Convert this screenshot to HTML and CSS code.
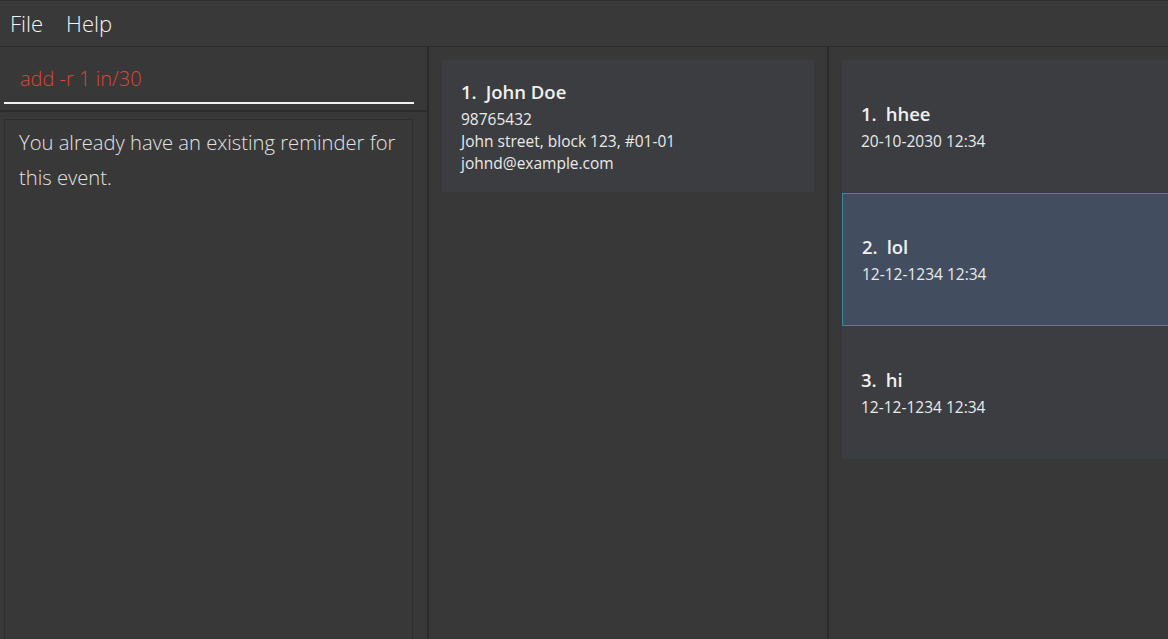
FILE: index.html
```html
<!DOCTYPE html>
<html>
<head>
<meta charset="utf-8">
<link rel="stylesheet" href="styles.css">
</head>
<body>
<div class="menubar">
  <span class="menu-item">File</span>
  <span class="menu-item">Help</span>
</div>
<div class="main">
  <div class="left">
    <div class="cmd">
      <div class="cmd-field">add -r 1 in/30</div>
    </div>
    <div class="result">
      <div class="result-text">You already have an existing reminder for this event.</div>
    </div>
  </div>
  <div class="mid">
    <div class="card">
      <div class="title"><span class="idx">1.</span>John Doe</div>
      <div class="line">98765432</div>
      <div class="line">John street, block 123, #01-01</div>
      <div class="line">johnd@example.com</div>
    </div>
  </div>
  <div class="right">
    <div class="card">
      <div class="title"><span class="idx">1.</span>hhee</div>
      <div class="line">20-10-2030 12:34</div>
    </div>
    <div class="card selected">
      <div class="title"><span class="idx">2.</span>lol</div>
      <div class="line">12-12-1234 12:34</div>
    </div>
    <div class="card">
      <div class="title"><span class="idx">3.</span>hi</div>
      <div class="line">12-12-1234 12:34</div>
    </div>
  </div>
</div>
</body>
</html>
```
FILE: styles.css
```css
* { box-sizing: border-box; }
html, body {
  margin: 0;
  padding: 0;
  width: 1168px;
  height: 639px;
  overflow: hidden;
  background: #383838;
  font-family: "Open Sans", "Noto Sans", sans-serif;
  color: #ffffff;
}
.menubar {
  height: 47px;
  border-top: 1px solid #303030;
  border-bottom: 1px solid #2c2c2c;
  display: flex;
  align-items: center;
  padding-left: 10px;
  gap: 23px;
  background: #393939;
}
.menu-item {
  font-size: 22px;
  font-weight: 300;
  color: #f4f4f4;
  line-height: 1;
  padding-bottom: 1px;
}
.main {
  display: flex;
  height: 592px;
}
.left {
  width: 429px;
  flex: none;
  border-right: 2px solid #2a2a2a;
  display: flex;
  flex-direction: column;
}
.cmd {
  height: 65px;
  padding: 0 13px 0 4px;
  border-bottom: 2px solid #2c2c2c;
}
.cmd-field {
  height: 57px;
  border-bottom: 2px solid #f2f2f2;
  padding: 19px 0 0 16px;
  font-size: 20px;
  font-weight: 300;
  line-height: 26px;
  color: #d6493d;
}
.result {
  flex: 1;
  margin: 7px 14px 0 4px;
  border: 1px solid #2e2e2e;
  border-bottom: none;
  padding: 5px 10px 0 14px;
}
.result-text {
  font-size: 20.2px;
  font-weight: 300;
  line-height: 35px;
  color: #e2e2e2;
}
.mid {
  width: 400px;
  flex: none;
  border-right: 2px solid #2a2a2a;
  padding: 13px 13px 0 13px;
}
.right {
  flex: none;
  width: 360px;
  padding: 13px 0 0 13px;
  display: flex;
  flex-direction: column;
}
.card {
  height: 132px;
  background: #3c3d40;
  display: flex;
  flex-direction: column;
  justify-content: center;
  padding-left: 19px;
}
.right .card {
  height: 133px;
}
.card.selected {
  background: #424e60;
  border: 1px solid #3a8c9c;
  padding-left: 19px;
}
.title {
  font-size: 18.5px;
  font-weight: 600;
  line-height: 25px;
  color: #f0f0f0;
  margin-bottom: 4px;
}
.idx {
  margin-right: 9px;
}
.line {
  font-size: 15.5px;
  line-height: 22px;
  color: #eaeaea;
}
```
